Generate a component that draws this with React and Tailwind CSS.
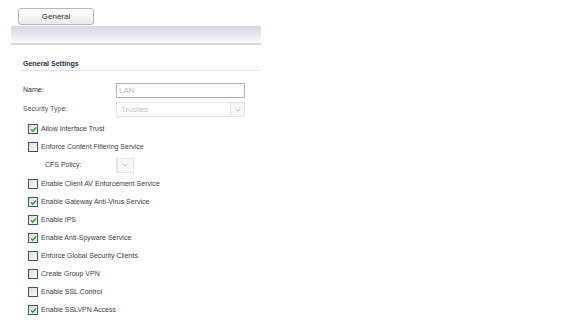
import React from "react";

const FONT = { fontFamily: '"Liberation Sans", Arial, sans-serif' };

function Check({ checked }) {
  return (
    <span className="inline-flex items-center justify-center w-[10px] h-[10px] border border-[#3a5570] bg-gradient-to-br from-[#dcdcd7] to-white shrink-0">
      {checked ? (
        <svg width="7" height="7" viewBox="0 0 7 7">
          <path d="M1 3.5 L2.8 5.3 L6 1.5" fill="none" stroke="#21a121" strokeWidth="1.4" />
        </svg>
      ) : null}
    </span>
  );
}

function CheckRow({ label, checked }) {
  return (
    <div className="h-[18px] flex items-center gap-[3px] pl-[28px]">
      <Check checked={checked} />
      <span className="text-[7px] text-[#3c3c3c]">{label}</span>
    </div>
  );
}

function Arrow() {
  return (
    <span className="w-[14px] h-full border-l border-[#e4e4e4] flex items-center justify-center bg-[#f7f7f7]">
      <svg width="6" height="4" viewBox="0 0 6 4">
        <path d="M0.5 0.5 L3 3 L5.5 0.5" fill="none" stroke="#c8c8c8" strokeWidth="1" />
      </svg>
    </span>
  );
}

export default function App() {
  const rows = [
    ["Enable Client AV Enforcement Service", false],
    ["Enable Gateway Anti-Virus Service", true],
    ["Enable IPS", true],
    ["Enable Anti-Spyware Service", true],
    ["Enforce Global Security Clients", false],
    ["Create Group VPN", false],
    ["Enable SSL Control", false],
    ["Enable SSLVPN Access", true],
  ];
  return (
    <div className="w-[576px] h-[330px] bg-white overflow-hidden" style={FONT}>
      <div className="pt-[8px] pl-[18px]">
        <div className="w-[76px] h-[17px] border border-[#b4b4bc] rounded-[3px] bg-gradient-to-b from-white to-[#eaeaef] flex items-center justify-center text-[8px] text-[#333]">
          General
        </div>
      </div>
      <div className="ml-[11px] w-[250px] mt-[1px]">
        <div className="h-[16px] bg-gradient-to-b from-[#d4d7e5] to-[#f5f5f8]" />
        <div className="h-[2px] mt-[1px] bg-[#d6d6d6]" />
      </div>
      <div className="ml-[20px] w-[241px] mt-[14px]">
        <div className="pl-[3px] h-[12px] text-[7px] font-bold text-[#22334d] border-b border-[#e2e2e2]">General Settings</div>
        <div className="mt-[12px] flex items-center h-[15px]">
          <span className="w-[96px] pl-[3px] text-[7px] text-[#333]">Name:</span>
          <div className="w-[129px] h-[15px] border border-[#a4b4c0] text-[8px] text-[#b8b8b8] pl-[2px] flex items-center">LAN</div>
        </div>
        <div className="mt-[4px] flex items-center h-[15px]">
          <span className="w-[96px] pl-[3px] text-[7px] text-[#555]">Security Type:</span>
          <div className="w-[129px] h-[15px] border border-[#e4e4e4] text-[8px] text-[#c0c0c0] pl-[4px] flex items-center justify-between">
            <span>Trusted</span>
            <Arrow />
          </div>
        </div>
        <div className="-ml-[20px] mt-[3px]">
          <CheckRow label="Allow Interface Trust" checked />
          <CheckRow label="Enforce Content Filtering Service" checked={false} />
          <div className="h-[18px] flex items-center">
            <span className="w-[116px] pl-[45px] text-[7px] text-[#3c3c3c]">CFS Policy:</span>
            <div className="w-[18px] h-[15px] border border-[#e4e4e4] flex">
              <Arrow />
            </div>
          </div>
          <div className="mt-[1px]">
            {rows.map(([l, c]) => (
              <CheckRow key={l} label={l} checked={c} />
            ))}
          </div>
        </div>
      </div>
    </div>
  );
}
